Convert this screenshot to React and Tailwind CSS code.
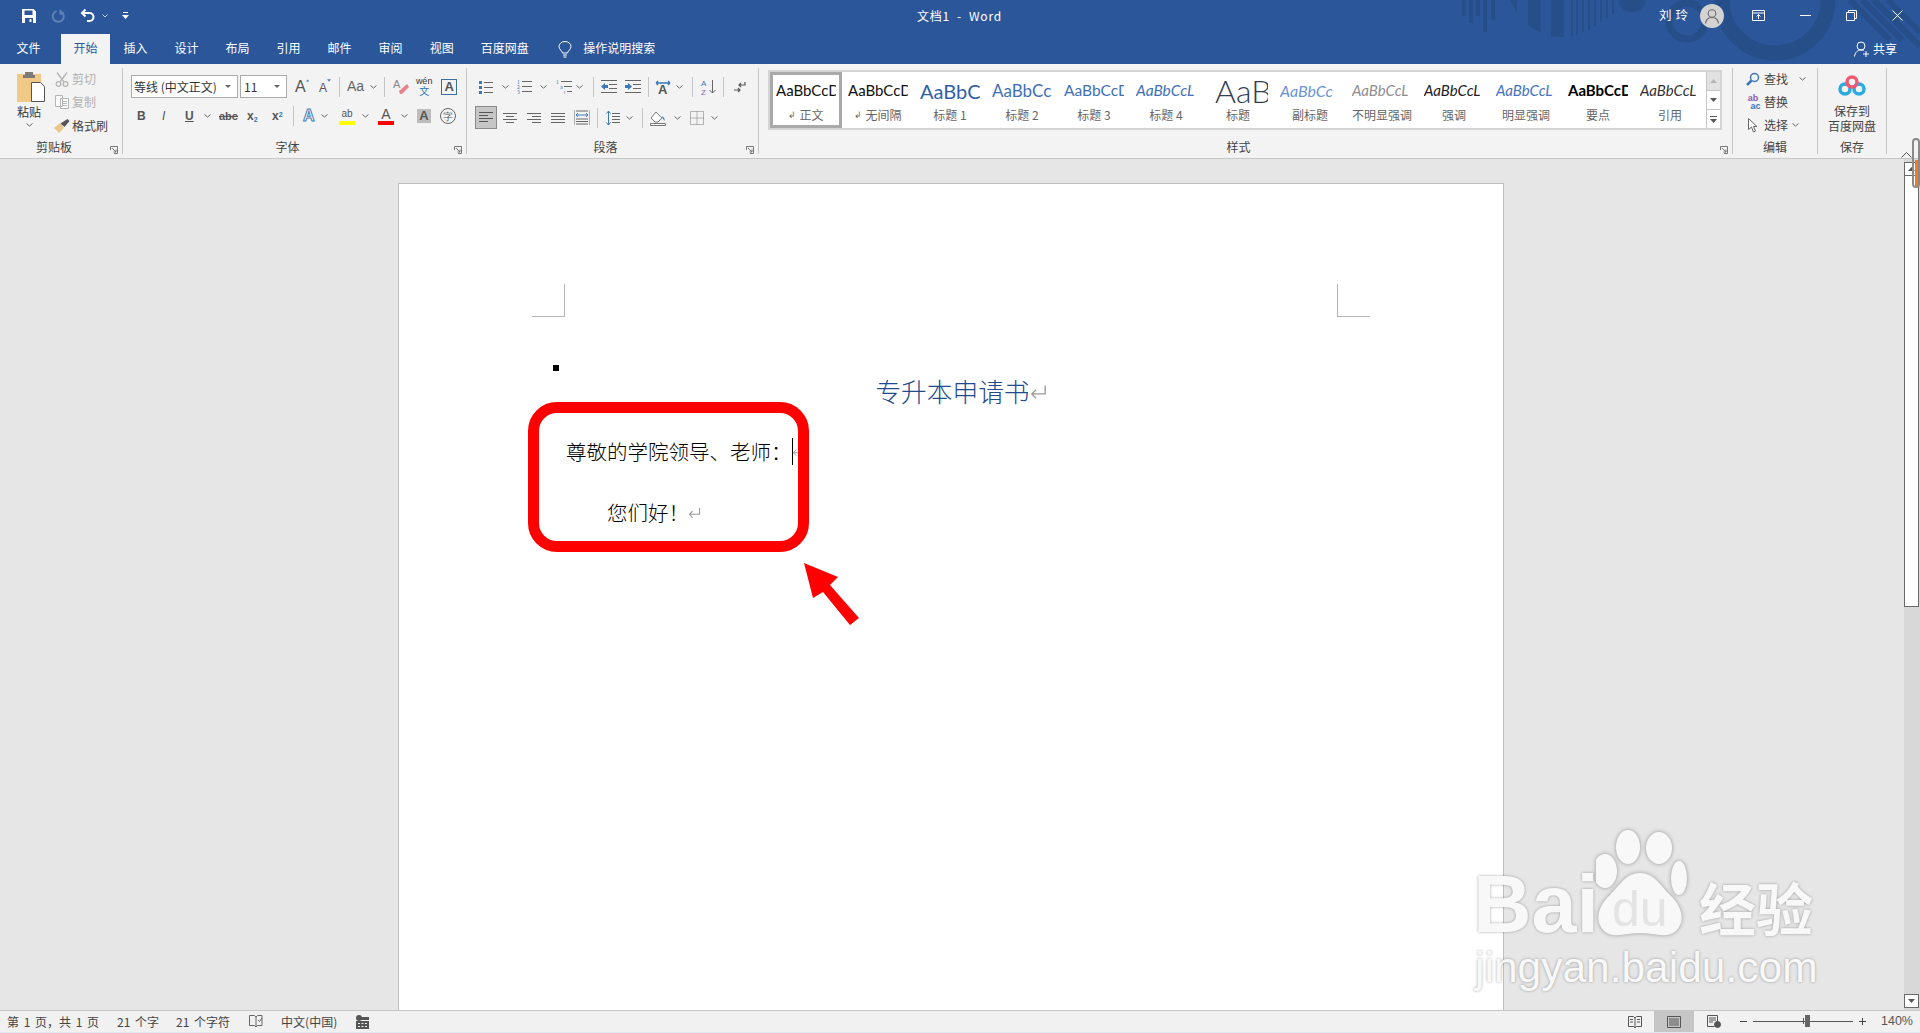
const Chev = ({ className = "" }) => (
  <svg width="7" height="4" viewBox="0 0 7 4" className={className} fill="none" stroke="#666" strokeWidth="1">
    <path d="M.5.5l3 2.6 3-2.6" />
  </svg>
);

const Sep = ({ className = "" }) => <div className={`w-px h-[20px] bg-[#c6c6c6] ${className}`} />;

const Launcher = () => (
  <svg width="8" height="8" viewBox="0 0 8 8" className="absolute right-[4px] bottom-0" fill="none" stroke="#777" strokeWidth="1">
    <path d="M.5 4V.5h7v7H4M2 2l4 4M6 3.5V6H3.5" />
  </svg>
);

const Group = ({ w, label, launcher, children }) => (
  <div className={`relative flex flex-col h-[86px] shrink-0 border-r border-[#c6c6c6] ${w}`}>
    <div className="flex-1 min-h-0">{children}</div>
    <div className={`h-[16px] leading-[18px] text-center text-[12px] text-[#444] ${launcher ? "pr-[14px]" : ""}`}>{label}</div>
    {launcher && <Launcher />}
  </div>
);

const Lines = ({ rows, w = 14, color = "#666", x = 0 }) => (
  <svg width={w + x} height="14" viewBox={`0 0 ${w + x} 14`} fill="none" stroke={color} strokeWidth="1">
    {rows.map(([a, b, y]) => (
      <path key={y + "" + a} d={`M${a} ${y}.5H${b}`} />
    ))}
  </svg>
);

const SaveIcon = () => (
  <svg width="16" height="16" viewBox="0 0 16 16" fill="#fff">
    <path fillRule="evenodd" d="M1 1h11.5L15 3.5V15H1zM3.5 2.5V7h8V2.5zM4 10v5h8v-5zM8.5 11h2v3h-2z" />
  </svg>
);

const Undo = ({ c = "#fff" }) => (
  <svg width="15" height="15" viewBox="0 0 15 15" fill="none" stroke={c} strokeWidth="2">
    <path d="M5.5 1.5L2 5l3.5 3.5M2 5h7.5a3.7 3.7 0 0 1 0 8H7" />
  </svg>
);

const TitleArt = () => (
  <svg width="480" height="64" viewBox="1440 0 480 64" className="absolute top-0 right-0" fill="#264e88">
    <path d="M1462 0h4v16h-4zM1469 0h4v23h-4zM1476 0h4v16h-4zM1483 0h4v32h-4zM1491 0h4v20h-4zM1510 0h7v14zM1528 0h13v33l-13-8zM1551 0h13v37h-13zM1571 0h2v36h-2zM1576 0h2v35h-2zM1582 0h2v32h-2zM1588 0h2v30h-2zM1594 0h2v26h-2zM1600 0h2v22h-2zM1606 0h2v18h-2zM1612 0h2v14h-2z" />
    <circle cx="1632" cy="-2" r="14" />
    <circle cx="1687" cy="21" r="18" fill="none" stroke="#264e88" strokeWidth="7" />
    <circle cx="1775" cy="0" r="53" fill="none" stroke="#264e88" strokeWidth="15" />
    <path d="M1850 0l40 40M1862 0l40 40M1874 0l46 46M1888 0l32 32" fill="none" stroke="#264e88" strokeWidth="6" />
  </svg>
);

const TABS = [
  { t: "文件", c: "px-[13.5px] mr-[7px]" },
  { t: "开始", c: "px-[12.5px] bg-[#f3f3f3] text-[#2b579a]" },
  { t: "插入", c: "px-[13.5px]" },
  { t: "设计", c: "px-[13.5px]" },
  { t: "布局", c: "px-[13.5px]" },
  { t: "引用", c: "px-[13.5px]" },
  { t: "邮件", c: "px-[13.5px]" },
  { t: "审阅", c: "px-[13.5px]" },
  { t: "视图", c: "px-[13.5px]" },
  { t: "百度网盘", c: "px-[13.5px]" },
];

const Avatar = () => (
  <div className="ml-[8px] w-[24px] h-[24px] rounded-full bg-[#d3d3d3] flex items-center justify-center">
    <svg width="16" height="16" viewBox="0 0 16 16" fill="none" stroke="#666" strokeWidth="1.1">
      <circle cx="8" cy="5.5" r="3.8" />
      <path d="M1.5 15.5c.5-4 3-6 6.5-6s6 2 6.5 6" />
    </svg>
  </div>
);

const TitleBar = () => (
  <div className="relative h-[34px] pb-[3px] flex items-center bg-transparent text-white text-[12px]">
    <div className="flex items-center">
      <div className="ml-[21px]"><SaveIcon /></div>
      <svg width="14" height="14" viewBox="0 0 14 14" className="ml-[14px]" fill="none" stroke="#5f82b6" strokeWidth="2">
        <path d="M9.5 2.3a5.5 5.5 0 1 1-4-.2M9.5 1v3.5H13" />
      </svg>
      <div className="ml-[15px]"><Undo /></div>
      <svg width="6" height="4" viewBox="0 0 6 4" className="ml-[7px]" fill="none" stroke="#c8d4e6"><path d="M.5.5L3 3 5.500.5" /></svg>
      <svg width="7" height="7" viewBox="0 0 7 7" className="ml-[14px]" fill="#fff"><path d="M1 0h5v1H1zM0 3h7L3.500 7z" /></svg>
    </div>
    <div className="ml-[788px] text-[12px] tracking-[0.8px] whitespace-pre">文档1  -  Word</div>
    <div className="ml-auto flex items-center">
      <span className="tracking-[4px] text-[12.5px]">刘玲</span>
      <Avatar />
      <svg width="13" height="11" viewBox="0 0 13 11" className="ml-[28px]" fill="none" stroke="#fff">
        <path d="M.5.500h12v10H.5zM.5 3h12M6.500 9V4.500M4.500 6.500l2-2 2 2" />
      </svg>
      <svg width="11" height="1" viewBox="0 0 11 1" className="ml-[35px]" fill="#fff"><path d="M0 0h11v1H0z" /></svg>
      <svg width="11" height="11" viewBox="0 0 11 11" className="ml-[35px]" fill="none" stroke="#fff">
        <path d="M.5 2.500h8v8h-8zM2.500 2.500v-2h8v8h-2" />
      </svg>
      <svg width="11" height="11" viewBox="0 0 11 11" className="ml-[35px] mr-[17px]" fill="none" stroke="#fff">
        <path d="M.5.500l10 10M10.500.500l-10 10" />
      </svg>
    </div>
  </div>
);

const TabBar = () => (
  <div className="relative h-[30px] flex items-stretch text-white text-[12px] pl-[3px]">
    {TABS.map(({ t, c }) => (
      <div key={t} className={`pb-[2px] flex items-center leading-none ${c}`}>
        {t}
      </div>
    ))}
    <svg width="14" height="17" viewBox="0 0 14 17" className="ml-[16px] self-center" fill="none" stroke="#fff">
      <path d="M4.500 12C4 9.500 1 8.500 1 5.500a6 5 0 0 1 12 0C13 8.500 10 9.500 9.500 12zM5 14h4M5.500 16h3" />
    </svg>
    <div className="ml-[11px] pb-[2px] flex items-center">操作说明搜索</div>
    <div className="ml-auto mr-[23px] flex items-center">
      <svg width="16" height="16" viewBox="0 0 16 16" fill="none" stroke="#fff">
        <circle cx="7" cy="5" r="4" />
        <path d="M.5 15.500C1 11.500 3.500 9 7 9c1 0 2 .2 2.700.6M9 13h6M12 10v6" />
      </svg>
      <span className="ml-[3px]">共享</span>
    </div>
  </div>
);

const ClipRow = ({ icon, label, muted, className = "" }) => (
  <div className={`flex items-center h-[20px] ${className}`}>
    <div className="w-[16px] h-[16px] flex items-center justify-center">{icon}</div>
    <span className={`ml-[2px] text-[12px] ${muted ? "text-[#b1b1b1]" : "text-[#444]"}`}>{label}</span>
  </div>
);

const Clipboard = () => (
  <Group w="w-[123px]" label="剪贴板" launcher>
    <div className="flex pl-[17px] pt-[1px]">
      <div className="flex flex-col items-start w-[36px] pt-[1px]">
        <svg width="28" height="32" viewBox="0 0 28 32">
          <path d="M0 4h24v28H0z" fill="#f0c987" />
          <path d="M8 2h8v5H8z" fill="#7a7a7a" />
          <path d="M6 5h12v3H6z" fill="#7a7a7a" />
          <path d="M14.500 12.500h9l4 4v15h-13z" fill="#fff" stroke="#555" />
        </svg>
        <span className="text-[12px] leading-[16px] mt-[2px] text-[#333]">粘贴</span>
        <Chev className="ml-[9px] mt-[3px]" />
      </div>
      <div className="flex flex-col ml-[1px]">
        <ClipRow
          muted
          label="剪切"
          icon={
            <svg width="14" height="15" viewBox="0 0 14 15" fill="none" stroke="#b5b5b5" strokeWidth="1.3">
              <circle cx="3.500" cy="12" r="2.300" /><circle cx="10.500" cy="12" r="2.300" />
              <path d="M2 .5l7 9.500M12 .5L5 10" />
            </svg>
          }
        />
        <ClipRow
          muted
          label="复制"
          className="mt-[3px]"
          icon={
            <svg width="14" height="14" viewBox="0 0 14 14" fill="#fff" stroke="#b5b5b5">
              <path d="M.5.500h7v11h-7zM5.500 3.500h8v10h-8zM7 6.500h5M7 8.500h5M7 10.500h5" />
            </svg>
          }
        />
        <ClipRow
          label="格式刷"
          className="mt-[4px]"
          icon={
            <svg width="16" height="14" viewBox="0 0 16 14">
              <path d="M0 9l6-5 4 5-5 5z" fill="#e9c78b" />
              <path d="M6.500 4.500l7-4.500 2 2-5 6z" fill="#555" />
            </svg>
          }
        />
      </div>
    </div>
  </Group>
);

const Select = ({ w, text, className = "" }) => (
  <div className={`h-[23px] ${w} border border-[#ababab] bg-white flex items-center pl-[2px] text-[12px] text-[#333] ${className}`}>
    <span className="flex-1 whitespace-nowrap overflow-hidden">{text}</span>
    <svg width="6" height="3" viewBox="0 0 6 3" className="mr-[6px]" fill="#666"><path d="M0 0h6L3 3z" /></svg>
  </div>
);

const BigA = ({ size = 15, color = "#555", weight = "font-normal", className = "" }) => (
  <span style={{ fontSize: size, color }} className={`leading-none ${weight} [font-family:'Liberation_Sans',sans-serif] ${className}`}>A</span>
);

const FontGroup = () => (
  <Group w="w-[344px]" label="字体" launcher>
    <div className="flex items-center pl-[8px] mt-[7px] h-[23px]">
      <Select w="w-[107px]" text="等线 (中文正文)" />
      <Select w="w-[47px]" text="11" className="ml-[2px] pl-[3px]" />
      <div className="ml-[8px] w-[14px] relative flex"><BigA size={16} />
        <svg width="5" height="3" viewBox="0 0 5 3" className="mt-0" fill="#4a7ebb"><path d="M0 3h5L2.500 0z" /></svg>
      </div>
      <div className="ml-[10px] w-[12px] flex"><BigA size={12} className="mt-[3px]" />
        <svg width="5" height="3" viewBox="0 0 5 3" fill="#4a7ebb"><path d="M0 0h5L2.500 3z" /></svg>
      </div>
      <Sep className="ml-[8px]" />
      <span className="ml-[7px] text-[14px] text-[#666] [font-family:'Liberation_Sans',sans-serif]">Aa</span>
      <Chev className="ml-[6px]" />
      <Sep className="ml-[7px]" />
      <svg width="16" height="16" viewBox="0 0 16 16" className="ml-[8px]">
        <path d="M6 12l8-7 2 3-7 7H7z" fill="#e8818f" />
        <text x="0" y="9" fontSize="11" fill="#888" fontFamily="Liberation Sans">A</text>
      </svg>
      <div className="ml-[7px] w-[16px] flex flex-col items-center text-[9px] leading-[9px]">
        <span className="text-[#333] [font-family:'Liberation_Sans',sans-serif]">wén</span>
        <span className="text-[#2e75b6] text-[10px] leading-[10px]">文</span>
      </div>
      <div className="ml-[9px] w-[16px] h-[16px] border border-[#3b6ea5] flex items-center justify-center">
        <BigA size={13} color="#555" weight="font-bold" />
      </div>
    </div>
    <div className="flex items-center pl-[14px] mt-[7px] h-[22px] text-[#555] [font-family:'Liberation_Sans',sans-serif]">
      <span className="w-[8px] text-[12px] font-bold">B</span>
      <span className="ml-[17px] w-[6px] text-[12px] italic">I</span>
      <span className="ml-[17px] w-[8px] text-[12px] font-bold underline">U</span>
      <Chev className="ml-[11px]" />
      <span className="ml-[8px] text-[11px] font-bold line-through">abc</span>
      <span className="ml-[9px] w-[14px] text-[12px] font-bold">x<sub className="text-[7px] text-[#2e75b6]">2</sub></span>
      <span className="ml-[11px] w-[14px] text-[12px] font-bold">x<sup className="text-[7px] text-[#2e75b6]">2</sup></span>
      <Sep className="ml-[7px]" />
      <span className="ml-[9px] w-[13px] text-[16px] font-bold leading-none text-white [-webkit-text-stroke:1px_#4a7ebb]">A</span>
      <Chev className="ml-[5px]" />
      <div className="ml-[11px] w-[16px] flex flex-col items-center">
        <span className="text-[10px] leading-[14px] text-[#555]">ab</span>
        <div className="w-[16px] h-[4px] bg-[#ffff00]" />
      </div>
      <Chev className="ml-[7px]" />
      <div className="ml-[9px] w-[16px] flex flex-col items-center">
        <span className="text-[14px] leading-[14px] text-[#555]">A</span>
        <div className="w-[16px] h-[4px] bg-[#ff0000]" />
      </div>
      <Chev className="ml-[7px]" />
      <div className="ml-[9px] w-[14px] h-[14px] bg-[#bdbdbd] flex items-center justify-center text-[13px] font-bold text-[#555]">A</div>
      <div className="ml-[9px] w-[16px] h-[16px] rounded-full border border-[#666] flex items-center justify-center text-[10px] text-[#555]">字</div>
    </div>
  </Group>
);

const Bullets = () => (
  <svg width="14" height="14" viewBox="0 0 14 14" fill="none" stroke="#666">
    <path d="M5 2.500h9M5 7.500h9M5 12.500h9" />
    <path d="M0 1h3v3H0zM0 6h3v3H0zM0 11h3v3H0z" fill="#3b78b8" stroke="none" />
  </svg>
);

const Numbers = () => (
  <svg width="15" height="15" viewBox="0 0 15 15" fill="none" stroke="#666">
    <path d="M5 2.500h10M5 7.500h10M5 12.500h10" />
    <text x="0" y="4.500" fontSize="5" fill="#3b78b8" stroke="none">1</text>
    <text x="0" y="9.500" fontSize="5" fill="#3b78b8" stroke="none">2</text>
    <text x="0" y="14.500" fontSize="5" fill="#3b78b8" stroke="none">3</text>
  </svg>
);

const Multi = () => (
  <svg width="16" height="15" viewBox="0 0 16 15" fill="none" stroke="#666">
    <path d="M5 2.500h11M8 7.500h8M11 12.500h5" />
    <text x="0" y="4.500" fontSize="5" fill="#3b78b8" stroke="none">1</text>
    <text x="4" y="9.500" fontSize="5" fill="#3b78b8" stroke="none">a</text>
    <text x="8" y="14.500" fontSize="5" fill="#3b78b8" stroke="none">i</text>
  </svg>
);

const Indent = ({ flip }) => (
  <svg width="16" height="13" viewBox="0 0 16 13" fill="none" stroke="#666">
    <path d="M0 .5h16M8 4.500h8M8 8.500h8M0 12.500h16" />
    <path d={flip ? "M0 5h3V3l4 3.500L3 10V8H0z" : "M7 5H4V3L0 6.500 4 10V8h3z"} fill="#3b78b8" stroke="none" />
  </svg>
);

const Para = () => (
  <Group w="w-[292px]" label="段落" launcher>
    <div className="flex items-center pl-[12px] mt-[7px] h-[23px]">
      <Bullets />
      <Chev className="ml-[9px]" />
      <div className="ml-[8px]"><Numbers /></div>
      <Chev className="ml-[8px]" />
      <div className="ml-[9px]"><Multi /></div>
      <Chev className="ml-[4px]" />
      <Sep className="ml-[10px]" />
      <div className="ml-[7px]"><Indent /></div>
      <div className="ml-[8px]"><Indent flip /></div>
      <Sep className="ml-[7px]" />
      <svg width="16" height="14" viewBox="0 0 16 14" className="ml-[6px]" fill="none">
        <text x="3" y="14" fontSize="13" fontWeight="700" fill="#555" fontFamily="Liberation Sans">A</text>
        <path d="M1 3h14M1 3l2-2M1 3l2 2M15 3l-2-2M15 3l-2 2" stroke="#3b78b8" strokeWidth="1.300" />
      </svg>
      <Chev className="ml-[5px]" />
      <Sep className="ml-[9px]" />
      <svg width="15" height="16" viewBox="0 0 15 16" className="ml-[8px]" fill="none">
        <text x="0" y="7" fontSize="8" fill="#3b78b8" fontFamily="Liberation Sans">A</text>
        <text x="0" y="15.500" fontSize="8" fill="#8e5cb5" fontFamily="Liberation Sans">Z</text>
        <path d="M11.500 1v13M8.500 11l3 3 3-3" stroke="#666" />
      </svg>
      <Sep className="ml-[7px]" />
      <svg width="12" height="12" viewBox="0 0 12 12" className="ml-[10px]" fill="none" stroke="#555" strokeWidth="1.200">
        <path d="M11 1v3H5M7 2L5 4l2 2M0 9h6M4 7l2 2-2 2" />
      </svg>
    </div>
    <div className="flex items-center pl-[8px] mt-[8px] h-[23px]">
      <div className="w-[22px] h-[23px] bg-[#c6c6c6] border border-[#8a8a8a] flex items-center justify-center">
        <Lines rows={[[0, 14, 1], [0, 9, 4], [0, 14, 7], [0, 9, 10]]} color="#555" />
      </div>
      <div className="ml-[6px]"><Lines rows={[[0, 14, 2], [3, 11, 5], [0, 14, 8], [3, 11, 11]]} /></div>
      <div className="ml-[10px]"><Lines rows={[[0, 14, 2], [5, 14, 5], [0, 14, 8], [5, 14, 11]]} /></div>
      <div className="ml-[10px]"><Lines rows={[[0, 14, 2], [0, 14, 5], [0, 14, 8], [0, 14, 11]]} /></div>
      <svg width="16" height="15" viewBox="0 0 16 15" className="ml-[9px]" fill="none" stroke="#666">
        <path d="M0 0v15M16 0v15M2 1h12M2 9h12M2 11.500h12M2 14h12" />
        <path d="M2 5h12M2 5l2-2M2 5l2 2M14 5l-2-2M14 5l-2 2" stroke="#3b78b8" />
      </svg>
      <Sep className="ml-[7px]" />
      <svg width="14" height="16" viewBox="0 0 14 16" className="ml-[8px]" fill="none" stroke="#666">
        <path d="M6 3.500h8M6 6.500h8M6 9.500h8M6 12.500h8" />
        <path d="M2.500 1v14M.5 3.500l2-2.500 2 2.500M.5 12.500l2 2.500 2-2.500" stroke="#3b78b8" />
      </svg>
      <Chev className="ml-[6px]" />
      <Sep className="ml-[9px]" />
      <svg width="16" height="16" viewBox="0 0 16 16" className="ml-[7px]" fill="none" stroke="#777">
        <path d="M1 8l5-6 6 6-4 4H5z" fill="#fff" />
        <path d="M12 6c2 1 3 3 2.500 5l-2-3z" fill="#3b78b8" stroke="none" />
        <path d="M.5 13.500h15v2H.5z" fill="#fff" />
      </svg>
      <Chev className="ml-[8px]" />
      <svg width="14" height="14" viewBox="0 0 14 14" className="ml-[9px]" fill="none" stroke="#777" strokeDasharray="1 1">
        <path d="M.5.500h13v13H.5zM7 .5v13M.5 7h13" />
      </svg>
      <Chev className="ml-[7px]" />
    </div>
  </Group>
);

const STYLES = [
  { s: "AaBbCcD", l: "正文", mark: true, c: "text-[#111] text-[15px]", active: true },
  { s: "AaBbCcD", l: "无间隔", mark: true, c: "text-[#111] text-[15px]" },
  { s: "AaBbC", l: "标题 1", c: "text-[#2f5fa8] text-[20px]" },
  { s: "AaBbCc", l: "标题 2", c: "text-[#3f70b8] text-[17px]" },
  { s: "AaBbCcD", l: "标题 3", c: "text-[#3f70b8] text-[15.5px]" },
  { s: "AaBbCcL", l: "标题 4", c: "text-[#3f70b8] text-[15.5px] italic" },
  { s: "AaB", l: "标题", c: "ml-[7px] text-[#323e4f] text-[32px] font-light" },
  { s: "AaBbCc", l: "副标题", c: "text-[#6b94d6] text-[16px] italic" },
  { s: "AaBbCcL", l: "不明显强调", c: "text-[#8f8f8f] text-[15px] italic" },
  { s: "AaBbCcL", l: "强调", c: "text-[#222] text-[15px] italic" },
  { s: "AaBbCcL", l: "明显强调", c: "text-[#4472c4] text-[15px] italic" },
  { s: "AaBbCcD", l: "要点", c: "text-black text-[15px] font-bold" },
  { s: "AaBbCcL", l: "引用", c: "text-[#333] text-[15px] italic" },
];

const StyleItem = ({ s, l, mark, c, active }) => (
  <div className={`w-[72px] h-full flex flex-col items-center shrink-0 ${active ? "border-[3px] border-[#a9a9a9]" : "border-[3px] border-transparent"}`}>
    <div className="h-[31px] w-[60px] flex items-center justify-start overflow-hidden whitespace-nowrap [font-family:'Lato','Liberation_Sans',sans-serif]">
      <span className={`shrink-0 ${c}`}>{s}</span>
    </div>
    <div className="mt-[1px] text-[12px] leading-[16px] text-[#666] flex items-center">
      {mark && <span className="text-[9px] mr-[3px] text-[#666]">↲</span>}
      {l}
    </div>
  </div>
);

const ScrollBtn = ({ children, className = "" }) => (
  <div className={`flex-1 border-t border-[#c6c6c6] first:border-t-0 flex items-center justify-center ${className}`}>{children}</div>
);

const Styles = () => (
  <Group w="w-[974px]" label="样式" launcher>
    <div className="ml-[9px] mt-[2px] w-[954px] h-[60px] border-2 border-[#d4d4d4] bg-white flex">
      {STYLES.map((st) => (
        <StyleItem key={st.l} {...st} />
      ))}
      <div className="ml-auto w-[15px] flex flex-col border-l border-[#c6c6c6]">
        <ScrollBtn className="bg-[#e2e2e2]">
          <svg width="7" height="4" viewBox="0 0 7 4" fill="#b5b5b5"><path d="M0 4h7L3.500 0z" /></svg>
        </ScrollBtn>
        <ScrollBtn>
          <svg width="7" height="4" viewBox="0 0 7 4" fill="#555"><path d="M0 0h7L3.500 4z" /></svg>
        </ScrollBtn>
        <ScrollBtn>
          <svg width="7" height="7" viewBox="0 0 7 7" fill="#555"><path d="M0 0h7v1H0zM0 3h7L3.500 7z" /></svg>
        </ScrollBtn>
      </div>
    </div>
  </Group>
);

const EditRow = ({ icon, label, chev, className = "" }) => (
  <div className={`flex items-center h-[20px] ${className}`}>
    <div className="w-[16px] flex justify-center">{icon}</div>
    <span className="ml-[3px] text-[12px] text-[#444]">{label}</span>
    {chev}
  </div>
);

const Edit = () => (
  <Group w="w-[85px]" label="编辑">
    <div className="pl-[12px] pt-[1px] flex flex-col">
      <EditRow
        label="查找"
        chev={<Chev className="ml-[11px]" />}
        icon={
          <svg width="14" height="14" viewBox="0 0 14 14" fill="none" stroke="#3b78b8" strokeWidth="1.500">
            <circle cx="8.500" cy="5.500" r="4" />
            <path d="M5.500 8.500L1 13" strokeWidth="2.500" />
          </svg>
        }
      />
      <EditRow
        label="替换"
        className="mt-[3px]"
        icon={
          <div className="flex flex-col items-center text-[9px] leading-[8px] font-bold [font-family:'Liberation_Sans',sans-serif]">
            <span className="text-[#8e5cb5]">ab</span>
            <span className="text-[#3b78b8] ml-[5px]">ac</span>
          </div>
        }
      />
      <EditRow
        label="选择"
        className="mt-[3px]"
        chev={<Chev className="ml-[4px]" />}
        icon={
          <svg width="10" height="15" viewBox="0 0 10 15" fill="#fff" stroke="#666">
            <path d="M.5.500v11l3-2.500 2 5 2-1-2-4.500H9z" />
          </svg>
        }
      />
    </div>
  </Group>
);

const SaveGroup = () => (
  <Group w="w-[69px]" label="保存">
    <div className="flex flex-col items-center pt-[7px] text-[12px] leading-[15px] text-[#444]">
      <svg width="28" height="21" viewBox="0 0 28 21" fill="none" strokeWidth="3.500">
        <circle cx="7" cy="14" r="5" stroke="#29abe2" />
        <circle cx="21" cy="14" r="5" stroke="#29abe2" />
        <circle cx="14" cy="7" r="5" stroke="#ef5a6f" />
      </svg>
      <span className="mt-[7px]">保存到</span>
      <span>百度网盘</span>
    </div>
  </Group>
);

const Ribbon = () => (
  <div className="h-[95px] shrink-0 bg-[#f3f3f3] border-b border-[#c6c6c6] flex pt-[4px]">
    <Clipboard />
    <FontGroup />
    <Para />
    <Styles />
    <Edit />
    <SaveGroup />
    <div className="flex-1 flex justify-end items-end pb-0 pr-[8px]">
      <svg width="11" height="6" viewBox="0 0 11 6" fill="none" stroke="#555"><path d="M.5 5.500l5-5 5 5" /></svg>
    </div>
  </div>
);

const ReturnMark = ({ className = "", size = 14, color = "#999" }) => (
  <svg width={size} height={size} viewBox="0 0 14 14" fill="none" stroke={color} strokeWidth="1.100" className={`inline-block ${className}`}>
    <path d="M12.500 2v7H1.500M5 5.500L1.500 9 5 12.500" />
  </svg>
);

const Page = () => (
  <div className="w-[1106px] min-h-[1000px] bg-white border border-[#bfbfbf] px-[133px] pt-[100px] text-black [font-family:'Noto_Sans_CJK_SC',sans-serif]">
    <div className="flex justify-between">
      <div className="w-[33px] h-[33px] border-r border-b border-[#b3b3b3]" />
      <div className="w-[33px] h-[33px] border-l border-b border-[#b3b3b3]" />
    </div>
    <div className="mt-[48px] ml-[21px] w-[6px] h-[6px] bg-black" />
    <div className="mt-[3px] h-[34px] flex items-center justify-center pl-[20px] text-[#234a8c] text-[25.7px] font-light leading-none">
      专升本申请书
      <ReturnMark size={17} />
    </div>
    <div className="mt-[26px] h-[34px] pl-[34px] flex items-center text-[20.5px] font-light leading-none whitespace-nowrap">
      尊敬的学院领导、老师：
      <span className="w-px h-[27px] bg-black" />
      <ReturnMark size={12} className="-ml-[1px]" />
    </div>
    <div className="mt-[27px] h-[34px] pl-[75px] flex items-center text-[20.5px] font-light leading-none whitespace-nowrap">
      您们好！
      <ReturnMark size={13} className="-ml-[1px]" />
    </div>
  </div>
);

const Scrollbar = () => (
  <div className="w-[16px] shrink-0 bg-[#d8d8d8] flex flex-col pt-[3px] pb-[2px]">
    <div className="h-[14px] w-[15px] bg-white border border-[#6a6a6a] flex items-center justify-center">
      <svg width="7" height="4" viewBox="0 0 7 4" fill="#555"><path d="M0 4h7L3.500 0z" /></svg>
    </div>
    <div className="h-[431px] w-[15px] bg-white border border-[#6a6a6a] border-t-0" />
    <div className="mt-auto h-[14px] w-[15px] bg-white border border-[#6a6a6a] flex items-center justify-center">
      <svg width="7" height="4" viewBox="0 0 7 4" fill="#555"><path d="M0 0h7L3.500 4z" /></svg>
    </div>
  </div>
);

const Annotations = () => (
  <>
    <div className="absolute left-[528px] top-[402px] w-[281px] h-[150px] border-[11px] border-[#ff0000] rounded-[29px]" />
    <svg width="60" height="66" viewBox="0 0 60 66" className="absolute left-[802px] top-[561px]" fill="#ff0000">
      <path d="M2 2L36 16 28 24 57 57 48 64 21 31 11 37z" />
    </svg>
    <div className="absolute left-[1912px] top-[138px] w-[8px] h-[50px] rounded-[4px] border-2 border-[#8a8a8a]">
      <div className="absolute left-[1px] top-[20px] w-[3px] h-[26px] bg-[#f47a20]" />
    </div>
  </>
);

const Watermark = () => (
  <div className="absolute left-[1470px] top-[825px] w-[350px] h-[170px] text-[#f8f8f8] [text-shadow:0_0_3px_rgba(0,0,0,0.35)] select-none">
    <div className="absolute left-[3px] top-[34px] text-[81px] font-bold leading-[90px] [font-family:'Liberation_Sans',sans-serif]">Bai</div>
    <svg width="92" height="114" viewBox="0 0 92 114" className="absolute left-[126px] top-0 [filter:drop-shadow(0_0_2px_rgba(0,0,0,0.35))]" fill="#f8f8f8">
      <ellipse cx="32" cy="22" rx="12" ry="17" />
      <ellipse cx="63" cy="23" rx="13" ry="16" />
      <ellipse cx="9" cy="46" rx="12" ry="17" />
      <ellipse cx="83" cy="53" rx="8" ry="17" />
      <path d="M44 48c14 0 20 12 30 22 12 11 16 26 6 36-9 8-22 2-36 2s-27 6-36-2C-2 96 2 81 14 70c10-10 16-22 30-22z" />
    </svg>
    <div className="absolute left-[142px] top-[54px] text-[50px] leading-[60px] text-[#e4e4e4] [text-shadow:none] [font-family:'Liberation_Sans',sans-serif]">du</div>
    <div className="absolute left-[229px] top-[46px] text-[57px] font-bold leading-[70px] [font-family:'Noto_Sans_CJK_SC',sans-serif] whitespace-nowrap">经验</div>
    <div className="absolute left-[5px] top-[118px] text-[42.5px] leading-[50px] whitespace-nowrap [font-family:'Liberation_Sans',sans-serif]">jingyan.baidu.com</div>
  </div>
);

const StatusIcon = ({ children, className = "" }) => <span className={`flex items-center ${className}`}>{children}</span>;

const StatusBar = () => (
  <div className="h-[23px] shrink-0 bg-[#f1f1f1] border-t border-[#c6c6c6] flex items-center text-[12px] text-[#444] pl-[7px] border-b-[1px] border-b-[#dfe8f3] [word-spacing:2px]">
    <span>第 1 页，共 1 页</span>
    <span className="ml-[18px]">21 个字</span>
    <span className="ml-[17px]">21 个字符</span>
    <StatusIcon className="ml-[19px]">
      <svg width="14" height="13" viewBox="0 0 14 13" fill="none" stroke="#666">
        <path d="M.5.500h5L7 2l1.500-1.500H13v10H8.500L7 12l-1.500-1.500H.5zM7 2v10M9 5l1.500 1.500L13 3" />
      </svg>
    </StatusIcon>
    <span className="ml-[18px]">中文(中国)</span>
    <StatusIcon className="ml-[19px]">
      <svg width="13" height="14" viewBox="0 0 13 14" fill="#555">
        <circle cx="3" cy="3" r="3" />
        <path d="M5 2h8v3H5zM0 6h13v8H0z" />
        <path d="M2 8h2v1H2zM5.500 8h2v1h-2zM9 8h2v1H9zM2 11h2v1H2zM5.500 11h2v1h-2zM9 11h2v1H9z" fill="#f1f1f1" />
      </svg>
    </StatusIcon>
    <div className="ml-auto flex items-center h-full">
      <svg width="14" height="12" viewBox="0 0 14 12" fill="none" stroke="#555">
        <path d="M.5.500h5L7 2l1.500-1.500h5v10h-5L7 12l-1.500-1.500h-5zM7 2v10M2 3.500h3M2 6h3M9 3.500h3M9 6h3" />
      </svg>
      <div className="ml-[12px] w-[40px] h-full bg-[#c6c6c6] flex items-center justify-center">
        <svg width="14" height="12" viewBox="0 0 14 12" fill="none" stroke="#555">
          <path d="M.5.500h13v11H.5zM2 3h10M2 5h10M2 7h10M2 9h10" />
        </svg>
      </div>
      <svg width="14" height="13" viewBox="0 0 14 13" className="ml-[13px]" fill="none" stroke="#555">
        <path d="M.5.500h10v8M.5.500v11h7M2 3h7M2 5h7M2 7h4" />
        <circle cx="10.500" cy="9.500" r="3" fill="#555" />
      </svg>
      <span className="ml-[19px] w-[7px] h-px bg-[#444]" />
      <div className="relative ml-[6px] w-[100px] h-px bg-[#555]">
        <div className="absolute left-[52px] top-[-6px] w-[5px] h-[12px] bg-[#666]" />
        <div className="absolute left-[50px] top-[-3px] w-px h-[6px] bg-[#555]" />
      </div>
      <svg width="7" height="7" viewBox="0 0 7 7" className="ml-[6px]" stroke="#444"><path d="M0 3.500h7M3.500 0v7" /></svg>
      <span className="ml-[15px] mr-[7px] w-[32px] text-[#555] [font-family:'Liberation_Sans',sans-serif] text-[12.5px]">140%</span>
    </div>
  </div>
);

export default function App() {
  return (
    <div className="relative h-[1033px] w-[1920px] overflow-hidden flex flex-col bg-[#e6e6e6] [font-family:'Noto_Sans_CJK_SC','Liberation_Sans',sans-serif]">
      <div className="relative shrink-0 bg-[#2b579a] overflow-hidden">
        <TitleArt />
        <TitleBar />
        <TabBar />
      </div>
      <Ribbon />
      <div className="flex-1 min-h-0 flex overflow-hidden">
        <div className="flex-1 pl-[398px] pt-[24px] overflow-hidden">
          <Page />
        </div>
        <Scrollbar />
      </div>
      <StatusBar />
      <Watermark />
      <Annotations />
    </div>
  );
}
